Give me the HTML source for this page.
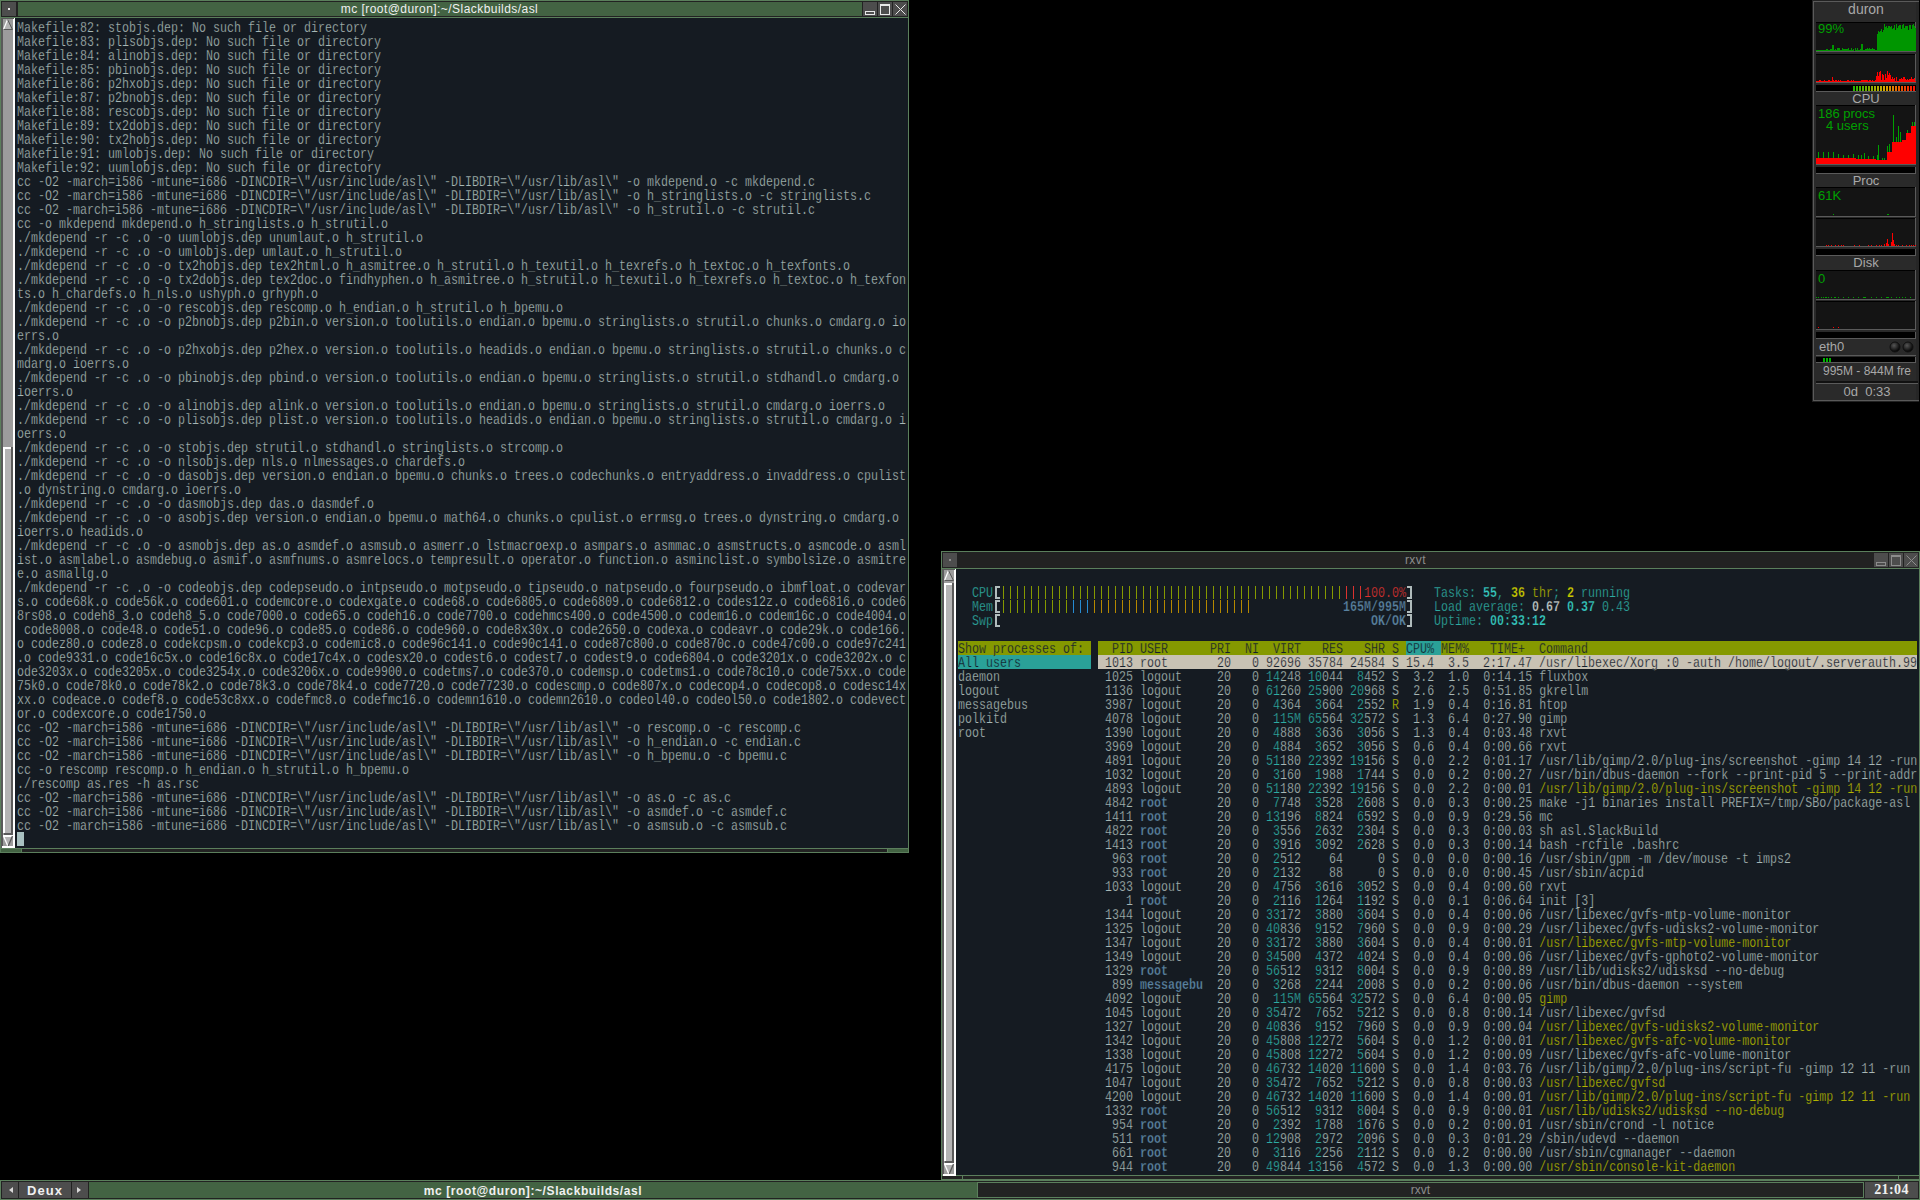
<!DOCTYPE html><html><head><meta charset="utf-8"><style>html,body{margin:0;padding:0;background:#000;width:1920px;height:1200px;overflow:hidden}
body{position:relative}
.a{position:absolute}
.term{position:absolute;font-family:"Liberation Mono",monospace;font-size:14px;line-height:14px;white-space:pre;transform-origin:0 0;transform:scaleX(0.833198)}
.term div{height:14px;position:relative;top:1px}
.term{-webkit-text-stroke:0.25px #151b22}
.n{color:#a8b8b6}.cyn{color:#2eaca2}.bcy{color:#35c9c0;font-weight:bold}.byl{color:#c8c800;font-weight:bold}.yl{color:#b2b400}
.brk{color:#b4bebe;font-weight:bold}.olv{color:#859900}.red{color:#dc322f}.blu{color:#268bd2}.org{color:#b58900}
.bgy{color:#5a82a0;font-weight:bold}.bwh{color:#c0c8c8;font-weight:bold}.dk{color:#14202c}.c{color:#2eaca2}
.sO{-webkit-text-stroke-color:#859900}.sT{-webkit-text-stroke-color:#2aa198}.sB{-webkit-text-stroke-color:#c8c2b4}
.sans{font-family:"Liberation Sans",sans-serif}
</style></head><body><div class="a" style="left:0px;top:0px;width:909px;height:853px;background:#5b7f5c;"></div><div class="a" style="left:1px;top:1px;width:907px;height:16px;background:#222222;"></div><div class="a" style="left:2px;top:2px;width:14px;height:14px;background:#4d4d4d;"></div><div class="a" style="left:8px;top:8px;width:2px;height:2px;background:#e8e8e8;"></div><div class="a" style="left:18px;top:2px;width:844px;height:14px;background:#436343;"></div><div class="a" style="left:863px;top:2px;width:14px;height:14px;background:#4d4d4d;"></div><div class="a" style="left:878px;top:2px;width:14px;height:14px;background:#4d4d4d;"></div><div class="a" style="left:893px;top:2px;width:14px;height:14px;background:#4d4d4d;"></div><svg class="a" style="left:863px;top:2px" width="44" height="14" viewBox="0 0 44 14"><rect x="2.5" y="9.5" width="9" height="3" fill="none" stroke="#e8e8e8" stroke-width="1"/><rect x="17.5" y="2.5" width="9" height="10" fill="none" stroke="#e8e8e8" stroke-width="1"/><rect x="17" y="2" width="10" height="2" fill="#e8e8e8"/><path d="M32.5 2.5 L42.5 12.5 M42.5 2.5 L32.5 12.5" stroke="#e8e8e8" stroke-width="1"/></svg><div class="a sans" style="left:18px;top:2px;width:843px;height:14px;line-height:14px;text-align:center;font-size:12px;letter-spacing:0.45px;color:#f0f0f0">mc [root@duron]:~/Slackbuilds/asl</div><div class="a" style="left:1px;top:18px;width:907px;height:830px;background:#151b22;"></div><div class="a" style="left:1px;top:18px;width:14px;height:830px;background:#5a5a5a;"></div><div class="a" style="left:3px;top:18px;width:10px;height:830px;background:#9c9c9c;"></div><div class="a" style="left:13px;top:18px;width:2px;height:830px;background:#ffffff;"></div><div class="a" style="left:1px;top:849px;width:907px;height:3px;background:#222222;"></div><div class="a" style="left:1px;top:849px;width:20px;height:3px;background:#436343;"></div><div class="a" style="left:888px;top:849px;width:20px;height:3px;background:#436343;"></div><div class="a" style="left:21px;top:849px;width:1px;height:3px;background:#5b7f5c;"></div><div class="a" style="left:887px;top:849px;width:1px;height:3px;background:#5b7f5c;"></div><svg class="a" style="left:1px;top:18px" width="14" height="13" viewBox="0 0 14 13"><rect x="0" y="0" width="13" height="1" fill="#5a5a5a"/><polygon points="2.5,11.5 6.5,1.5 10.5,11.5" fill="#b4b4b4"/><path d="M2.5 11.5 L6.5 1.5" stroke="#fff" stroke-width="1.2" fill="none"/><path d="M6.5 1.5 L11.5 11.5 L2.5 11.5" stroke="#5a5a5a" stroke-width="1" fill="none"/></svg><div class="a" style="left:3px;top:447px;width:10px;height:388px;background:#5a5a5a;"></div><div class="a" style="left:3px;top:447px;width:8px;height:386px;background:#ffffff;"></div><div class="a" style="left:5px;top:449px;width:6px;height:384px;background:#b4b4b4;"></div><div class="a" style="left:3px;top:833px;width:1px;height:2px;background:#9c9c9c;"></div><svg class="a" style="left:1px;top:835px" width="14" height="13" viewBox="0 0 14 13"><polygon points="2,0.5 12,0.5 7,11" fill="#b4b4b4"/><path d="M2 1 L12 1" stroke="#fff" stroke-width="2" fill="none"/><path d="M2.5 1 L6.8 11" stroke="#fff" stroke-width="1.3" fill="none"/><path d="M11.5 1 L7.2 11" stroke="#5a5a5a" stroke-width="1.3" fill="none"/><rect x="1" y="11" width="13" height="2" fill="#fff"/></svg><div class="a" style="left:17px;top:832px;width:7px;height:14px;background:#a8c0c0;"></div><div class="term" style="left:17px;top:20px;color:#a8b8b6"><div>Makefile:82: stobjs.dep: No such file or directory</div><div>Makefile:83: plisobjs.dep: No such file or directory</div><div>Makefile:84: alinobjs.dep: No such file or directory</div><div>Makefile:85: pbinobjs.dep: No such file or directory</div><div>Makefile:86: p2hxobjs.dep: No such file or directory</div><div>Makefile:87: p2bnobjs.dep: No such file or directory</div><div>Makefile:88: rescobjs.dep: No such file or directory</div><div>Makefile:89: tx2dobjs.dep: No such file or directory</div><div>Makefile:90: tx2hobjs.dep: No such file or directory</div><div>Makefile:91: umlobjs.dep: No such file or directory</div><div>Makefile:92: uumlobjs.dep: No such file or directory</div><div>cc -O2 -march=i586 -mtune=i686 -DINCDIR=\&quot;/usr/include/asl\&quot; -DLIBDIR=\&quot;/usr/lib/asl\&quot; -o mkdepend.o -c mkdepend.c</div><div>cc -O2 -march=i586 -mtune=i686 -DINCDIR=\&quot;/usr/include/asl\&quot; -DLIBDIR=\&quot;/usr/lib/asl\&quot; -o h_stringlists.o -c stringlists.c</div><div>cc -O2 -march=i586 -mtune=i686 -DINCDIR=\&quot;/usr/include/asl\&quot; -DLIBDIR=\&quot;/usr/lib/asl\&quot; -o h_strutil.o -c strutil.c</div><div>cc -o mkdepend mkdepend.o h_stringlists.o h_strutil.o</div><div>./mkdepend -r -c .o -o uumlobjs.dep unumlaut.o h_strutil.o</div><div>./mkdepend -r -c .o -o umlobjs.dep umlaut.o h_strutil.o</div><div>./mkdepend -r -c .o -o tx2hobjs.dep tex2html.o h_asmitree.o h_strutil.o h_texutil.o h_texrefs.o h_textoc.o h_texfonts.o</div><div>./mkdepend -r -c .o -o tx2dobjs.dep tex2doc.o findhyphen.o h_asmitree.o h_strutil.o h_texutil.o h_texrefs.o h_textoc.o h_texfon</div><div>ts.o h_chardefs.o h_nls.o ushyph.o grhyph.o</div><div>./mkdepend -r -c .o -o rescobjs.dep rescomp.o h_endian.o h_strutil.o h_bpemu.o</div><div>./mkdepend -r -c .o -o p2bnobjs.dep p2bin.o version.o toolutils.o endian.o bpemu.o stringlists.o strutil.o chunks.o cmdarg.o io</div><div>errs.o</div><div>./mkdepend -r -c .o -o p2hxobjs.dep p2hex.o version.o toolutils.o headids.o endian.o bpemu.o stringlists.o strutil.o chunks.o c</div><div>mdarg.o ioerrs.o</div><div>./mkdepend -r -c .o -o pbinobjs.dep pbind.o version.o toolutils.o endian.o bpemu.o stringlists.o strutil.o stdhandl.o cmdarg.o </div><div>ioerrs.o</div><div>./mkdepend -r -c .o -o alinobjs.dep alink.o version.o toolutils.o endian.o bpemu.o stringlists.o strutil.o cmdarg.o ioerrs.o</div><div>./mkdepend -r -c .o -o plisobjs.dep plist.o version.o toolutils.o headids.o endian.o bpemu.o stringlists.o strutil.o cmdarg.o i</div><div>oerrs.o</div><div>./mkdepend -r -c .o -o stobjs.dep strutil.o stdhandl.o stringlists.o strcomp.o</div><div>./mkdepend -r -c .o -o nlsobjs.dep nls.o nlmessages.o chardefs.o</div><div>./mkdepend -r -c .o -o dasobjs.dep version.o endian.o bpemu.o chunks.o trees.o codechunks.o entryaddress.o invaddress.o cpulist</div><div>.o dynstring.o cmdarg.o ioerrs.o</div><div>./mkdepend -r -c .o -o dasmobjs.dep das.o dasmdef.o</div><div>./mkdepend -r -c .o -o asobjs.dep version.o endian.o bpemu.o math64.o chunks.o cpulist.o errmsg.o trees.o dynstring.o cmdarg.o </div><div>ioerrs.o headids.o</div><div>./mkdepend -r -c .o -o asmobjs.dep as.o asmdef.o asmsub.o asmerr.o lstmacroexp.o asmpars.o asmmac.o asmstructs.o asmcode.o asml</div><div>ist.o asmlabel.o asmdebug.o asmif.o asmfnums.o asmrelocs.o tempresult.o operator.o function.o asminclist.o symbolsize.o asmitre</div><div>e.o asmallg.o</div><div>./mkdepend -r -c .o -o codeobjs.dep codepseudo.o intpseudo.o motpseudo.o tipseudo.o natpseudo.o fourpseudo.o ibmfloat.o codevar</div><div>s.o code68k.o code56k.o code601.o codemcore.o codexgate.o code68.o code6805.o code6809.o code6812.o codes12z.o code6816.o code6</div><div>8rs08.o codeh8_3.o codeh8_5.o code7000.o code65.o codeh16.o code7700.o codehmcs400.o code4500.o codem16.o codem16c.o code4004.o</div><div> code8008.o code48.o code51.o code96.o code85.o code86.o code960.o code8x30x.o code2650.o codexa.o codeavr.o code29k.o code166.</div><div>o codez80.o codez8.o codekcpsm.o codekcp3.o codemic8.o code96c141.o code90c141.o code87c800.o code870c.o code47c00.o code97c241</div><div>.o code9331.o code16c5x.o code16c8x.o code17c4x.o codesx20.o codest6.o codest7.o codest9.o code6804.o code3201x.o code3202x.o c</div><div>ode3203x.o code3205x.o code3254x.o code3206x.o code9900.o codetms7.o code370.o codemsp.o codetms1.o code78c10.o code75xx.o code</div><div>75k0.o code78k0.o code78k2.o code78k3.o code78k4.o code7720.o code77230.o codescmp.o code807x.o codecop4.o codecop8.o codesc14x</div><div>xx.o codeace.o codef8.o code53c8xx.o codefmc8.o codefmc16.o codemn1610.o codemn2610.o codeol40.o codeol50.o code1802.o codevect</div><div>or.o codexcore.o code1750.o</div><div>cc -O2 -march=i586 -mtune=i686 -DINCDIR=\&quot;/usr/include/asl\&quot; -DLIBDIR=\&quot;/usr/lib/asl\&quot; -o rescomp.o -c rescomp.c</div><div>cc -O2 -march=i586 -mtune=i686 -DINCDIR=\&quot;/usr/include/asl\&quot; -DLIBDIR=\&quot;/usr/lib/asl\&quot; -o h_endian.o -c endian.c</div><div>cc -O2 -march=i586 -mtune=i686 -DINCDIR=\&quot;/usr/include/asl\&quot; -DLIBDIR=\&quot;/usr/lib/asl\&quot; -o h_bpemu.o -c bpemu.c</div><div>cc -o rescomp rescomp.o h_endian.o h_strutil.o h_bpemu.o</div><div>./rescomp as.res -h as.rsc</div><div>cc -O2 -march=i586 -mtune=i686 -DINCDIR=\&quot;/usr/include/asl\&quot; -DLIBDIR=\&quot;/usr/lib/asl\&quot; -o as.o -c as.c</div><div>cc -O2 -march=i586 -mtune=i686 -DINCDIR=\&quot;/usr/include/asl\&quot; -DLIBDIR=\&quot;/usr/lib/asl\&quot; -o asmdef.o -c asmdef.c</div><div>cc -O2 -march=i586 -mtune=i686 -DINCDIR=\&quot;/usr/include/asl\&quot; -DLIBDIR=\&quot;/usr/lib/asl\&quot; -o asmsub.o -c asmsub.c</div><div></div></div><div class="a" style="left:941px;top:551px;width:979px;height:629px;background:#5b7f5c;"></div><div class="a" style="left:942px;top:552px;width:977px;height:16px;background:#222222;"></div><div class="a" style="left:943px;top:553px;width:14px;height:14px;background:#4d4d4d;"></div><div class="a" style="left:949px;top:559px;width:2px;height:2px;background:#8c8c8c;"></div><div class="a" style="left:959px;top:553px;width:914px;height:14px;background:#222222;"></div><div class="a" style="left:1874px;top:553px;width:14px;height:14px;background:#4d4d4d;"></div><div class="a" style="left:1889px;top:553px;width:14px;height:14px;background:#4d4d4d;"></div><div class="a" style="left:1904px;top:553px;width:14px;height:14px;background:#4d4d4d;"></div><svg class="a" style="left:1874px;top:553px" width="44" height="14" viewBox="0 0 44 14"><rect x="2.5" y="9.5" width="9" height="3" fill="none" stroke="#8c8c8c" stroke-width="1"/><rect x="17.5" y="2.5" width="9" height="10" fill="none" stroke="#8c8c8c" stroke-width="1"/><rect x="17" y="2" width="10" height="2" fill="#8c8c8c"/><path d="M32.5 2.5 L42.5 12.5 M42.5 2.5 L32.5 12.5" stroke="#8c8c8c" stroke-width="1"/></svg><div class="a sans" style="left:959px;top:553px;width:913px;height:14px;line-height:14px;text-align:center;font-size:12px;letter-spacing:0.45px;color:#8c8c8c">rxvt</div><div class="a" style="left:942px;top:569px;width:977px;height:606px;background:#151b22;"></div><div class="a" style="left:942px;top:569px;width:14px;height:606px;background:#5a5a5a;"></div><div class="a" style="left:944px;top:569px;width:10px;height:606px;background:#9c9c9c;"></div><div class="a" style="left:954px;top:569px;width:2px;height:606px;background:#ffffff;"></div><div class="a" style="left:942px;top:1176px;width:977px;height:3px;background:#222222;"></div><div class="a" style="left:962px;top:1176px;width:1px;height:3px;background:#5b7f5c;"></div><div class="a" style="left:1898px;top:1176px;width:1px;height:3px;background:#5b7f5c;"></div><svg class="a" style="left:942px;top:569px" width="14" height="13" viewBox="0 0 14 13"><rect x="0" y="0" width="13" height="1" fill="#5a5a5a"/><polygon points="2.5,11.5 6.5,1.5 10.5,11.5" fill="#b4b4b4"/><path d="M2.5 11.5 L6.5 1.5" stroke="#fff" stroke-width="1.2" fill="none"/><path d="M6.5 1.5 L11.5 11.5 L2.5 11.5" stroke="#5a5a5a" stroke-width="1" fill="none"/></svg><div class="a" style="left:944px;top:583px;width:10px;height:580px;background:#5a5a5a;"></div><div class="a" style="left:944px;top:583px;width:8px;height:578px;background:#ffffff;"></div><div class="a" style="left:946px;top:585px;width:6px;height:576px;background:#b4b4b4;"></div><div class="a" style="left:944px;top:1161px;width:1px;height:2px;background:#9c9c9c;"></div><svg class="a" style="left:942px;top:1163px" width="14" height="13" viewBox="0 0 14 13"><polygon points="2,0.5 12,0.5 7,11" fill="#b4b4b4"/><path d="M2 1 L12 1" stroke="#fff" stroke-width="2" fill="none"/><path d="M2.5 1 L6.8 11" stroke="#fff" stroke-width="1.3" fill="none"/><path d="M11.5 1 L7.2 11" stroke="#5a5a5a" stroke-width="1.3" fill="none"/><rect x="1" y="11" width="13" height="2" fill="#fff"/></svg><div class="a" style="left:958px;top:641px;width:133px;height:14px;background:#859900;"></div><div class="a" style="left:1098px;top:641px;width:819px;height:14px;background:#859900;"></div><div class="a" style="left:1406px;top:641px;width:35px;height:14px;background:#2aa198;"></div><div class="a" style="left:958px;top:655px;width:133px;height:14px;background:#2aa198;"></div><div class="a" style="left:1098px;top:655px;width:819px;height:14px;background:#c8c2b4;"></div><svg class="a" style="left:958px;top:571px" width="960" height="60"><rect x="45" y="15" width="1" height="13" fill="#859900"/><rect x="52" y="15" width="1" height="13" fill="#859900"/><rect x="59" y="15" width="1" height="13" fill="#859900"/><rect x="66" y="15" width="1" height="13" fill="#859900"/><rect x="73" y="15" width="1" height="13" fill="#859900"/><rect x="80" y="15" width="1" height="13" fill="#859900"/><rect x="87" y="15" width="1" height="13" fill="#859900"/><rect x="94" y="15" width="1" height="13" fill="#859900"/><rect x="101" y="15" width="1" height="13" fill="#859900"/><rect x="108" y="15" width="1" height="13" fill="#859900"/><rect x="115" y="15" width="1" height="13" fill="#859900"/><rect x="122" y="15" width="1" height="13" fill="#859900"/><rect x="129" y="15" width="1" height="13" fill="#859900"/><rect x="136" y="15" width="1" height="13" fill="#859900"/><rect x="143" y="15" width="1" height="13" fill="#859900"/><rect x="150" y="15" width="1" height="13" fill="#859900"/><rect x="157" y="15" width="1" height="13" fill="#859900"/><rect x="164" y="15" width="1" height="13" fill="#859900"/><rect x="171" y="15" width="1" height="13" fill="#859900"/><rect x="178" y="15" width="1" height="13" fill="#859900"/><rect x="185" y="15" width="1" height="13" fill="#859900"/><rect x="192" y="15" width="1" height="13" fill="#859900"/><rect x="199" y="15" width="1" height="13" fill="#859900"/><rect x="206" y="15" width="1" height="13" fill="#859900"/><rect x="213" y="15" width="1" height="13" fill="#859900"/><rect x="220" y="15" width="1" height="13" fill="#859900"/><rect x="227" y="15" width="1" height="13" fill="#859900"/><rect x="234" y="15" width="1" height="13" fill="#859900"/><rect x="241" y="15" width="1" height="13" fill="#859900"/><rect x="248" y="15" width="1" height="13" fill="#859900"/><rect x="255" y="15" width="1" height="13" fill="#859900"/><rect x="262" y="15" width="1" height="13" fill="#859900"/><rect x="269" y="15" width="1" height="13" fill="#859900"/><rect x="276" y="15" width="1" height="13" fill="#859900"/><rect x="283" y="15" width="1" height="13" fill="#859900"/><rect x="290" y="15" width="1" height="13" fill="#859900"/><rect x="297" y="15" width="1" height="13" fill="#859900"/><rect x="304" y="15" width="1" height="13" fill="#859900"/><rect x="311" y="15" width="1" height="13" fill="#859900"/><rect x="318" y="15" width="1" height="13" fill="#859900"/><rect x="325" y="15" width="1" height="13" fill="#859900"/><rect x="332" y="15" width="1" height="13" fill="#859900"/><rect x="339" y="15" width="1" height="13" fill="#859900"/><rect x="346" y="15" width="1" height="13" fill="#859900"/><rect x="353" y="15" width="1" height="13" fill="#859900"/><rect x="360" y="15" width="1" height="13" fill="#859900"/><rect x="367" y="15" width="1" height="13" fill="#859900"/><rect x="374" y="15" width="1" height="13" fill="#859900"/><rect x="381" y="15" width="1" height="13" fill="#859900"/><rect x="388" y="15" width="1" height="13" fill="#dc322f"/><rect x="395" y="15" width="1" height="13" fill="#dc322f"/><rect x="402" y="15" width="1" height="13" fill="#dc322f"/><rect x="45" y="29" width="1" height="13" fill="#859900"/><rect x="52" y="29" width="1" height="13" fill="#859900"/><rect x="59" y="29" width="1" height="13" fill="#859900"/><rect x="66" y="29" width="1" height="13" fill="#859900"/><rect x="73" y="29" width="1" height="13" fill="#859900"/><rect x="80" y="29" width="1" height="13" fill="#859900"/><rect x="87" y="29" width="1" height="13" fill="#859900"/><rect x="94" y="29" width="1" height="13" fill="#859900"/><rect x="101" y="29" width="1" height="13" fill="#859900"/><rect x="108" y="29" width="1" height="13" fill="#859900"/><rect x="115" y="29" width="1" height="13" fill="#268bd2"/><rect x="122" y="29" width="1" height="13" fill="#268bd2"/><rect x="129" y="29" width="1" height="13" fill="#268bd2"/><rect x="136" y="29" width="1" height="13" fill="#b58900"/><rect x="143" y="29" width="1" height="13" fill="#b58900"/><rect x="150" y="29" width="1" height="13" fill="#b58900"/><rect x="157" y="29" width="1" height="13" fill="#b58900"/><rect x="164" y="29" width="1" height="13" fill="#b58900"/><rect x="171" y="29" width="1" height="13" fill="#b58900"/><rect x="178" y="29" width="1" height="13" fill="#b58900"/><rect x="185" y="29" width="1" height="13" fill="#b58900"/><rect x="192" y="29" width="1" height="13" fill="#b58900"/><rect x="199" y="29" width="1" height="13" fill="#b58900"/><rect x="206" y="29" width="1" height="13" fill="#b58900"/><rect x="213" y="29" width="1" height="13" fill="#b58900"/><rect x="220" y="29" width="1" height="13" fill="#b58900"/><rect x="227" y="29" width="1" height="13" fill="#b58900"/><rect x="234" y="29" width="1" height="13" fill="#b58900"/><rect x="241" y="29" width="1" height="13" fill="#b58900"/><rect x="248" y="29" width="1" height="13" fill="#b58900"/><rect x="255" y="29" width="1" height="13" fill="#b58900"/><rect x="262" y="29" width="1" height="13" fill="#b58900"/><rect x="269" y="29" width="1" height="13" fill="#b58900"/><rect x="276" y="29" width="1" height="13" fill="#b58900"/><rect x="283" y="29" width="1" height="13" fill="#b58900"/><rect x="290" y="29" width="1" height="13" fill="#b58900"/><path d="M37 15h5v2h-3v9h3v2h-5z" fill="#b0bcbc"/><path d="M449 15h5v13h-5v-2h3v-9h-3z" fill="#b0bcbc"/><path d="M37 29h5v2h-3v9h3v2h-5z" fill="#b0bcbc"/><path d="M449 29h5v13h-5v-2h3v-9h-3z" fill="#b0bcbc"/><path d="M37 43h5v2h-3v9h3v2h-5z" fill="#b0bcbc"/><path d="M449 43h5v13h-5v-2h3v-9h-3z" fill="#b0bcbc"/></svg><div class="term" style="left:958px;top:571px"><div></div><div><span class="n">  </span><span class="cyn">CPU</span><span class="brk"> </span><span class="olv">                                                 </span><span class="red">   </span><span class="red">100.0%</span><span class="brk"> </span><span class="n">   </span><span class="cyn">Tasks: </span><span class="bcy">55</span><span class="cyn">, </span><span class="byl">36</span><span class="yl"> thr</span><span class="cyn">; </span><span class="byl">2</span><span class="cyn"> running</span></div><div><span class="n">  </span><span class="cyn">Mem</span><span class="brk"> </span><span class="olv">                                    </span><span class="n">             </span><span class="bgy">165M/995M</span><span class="brk"> </span><span class="n">   </span><span class="cyn">Load average: </span><span class="bwh">0.67 </span><span class="bcy">0.37 </span><span class="cyn">0.43</span></div><div><span class="n">  </span><span class="cyn">Swp</span><span class="brk"> </span><span class="n">                                                     </span><span class="bgy">OK/OK</span><span class="brk"> </span><span class="n">   </span><span class="cyn">Uptime: </span><span class="bcy">00:33:12</span></div><div></div><div><span class="dk sO">Show processes of: </span><span class="n"> </span><span class="dk sO">  PID USER      PRI  NI  VIRT   RES   SHR S </span><span class="dk sT">CPU% </span><span class="dk sO">MEM%   TIME+  Command</span></div><div><span class="dk sT">All users          </span><span class="n"> </span><span class="dk sB"> 1013 root       20   0 92696 35784 24584 S 15.4  3.5  2:17.47 /usr/libexec/Xorg :0 -auth /home/logout/.serverauth.99</span></div><div><span class="n">daemon             </span><span class="n"> </span><span class="n"> 1025 </span><span class="n">logout   </span><span class="n"> </span><span class="n"> 20   0 </span><span class="c">14</span><span class="n">248</span><span class="n"> </span><span class="c">10</span><span class="n">044</span><span class="n"> </span><span class="c"> 8</span><span class="n">452</span><span class="n"> </span><span class="n">S</span><span class="n"> </span><span class="n"> 3.2  1.0  0:14.15 </span><span class="n">fluxbox</span></div><div><span class="n">logout             </span><span class="n"> </span><span class="n"> 1136 </span><span class="n">logout   </span><span class="n"> </span><span class="n"> 20   0 </span><span class="c">61</span><span class="n">260</span><span class="n"> </span><span class="c">25</span><span class="n">900</span><span class="n"> </span><span class="c">20</span><span class="n">968</span><span class="n"> </span><span class="n">S</span><span class="n"> </span><span class="n"> 2.6  2.5  0:51.85 </span><span class="n">gkrellm</span></div><div><span class="n">messagebus         </span><span class="n"> </span><span class="n"> 3987 </span><span class="n">logout   </span><span class="n"> </span><span class="n"> 20   0 </span><span class="c"> 4</span><span class="n">364</span><span class="n"> </span><span class="c"> 3</span><span class="n">664</span><span class="n"> </span><span class="c"> 2</span><span class="n">552</span><span class="n"> </span><span class="yl">R</span><span class="n"> </span><span class="n"> 1.9  0.4  0:16.81 </span><span class="n">htop</span></div><div><span class="n">polkitd            </span><span class="n"> </span><span class="n"> 4078 </span><span class="n">logout   </span><span class="n"> </span><span class="n"> 20   0 </span><span class="c"> 115M</span><span class="n"> </span><span class="c">65</span><span class="n">564</span><span class="n"> </span><span class="c">32</span><span class="n">572</span><span class="n"> </span><span class="n">S</span><span class="n"> </span><span class="n"> 1.3  6.4  0:27.90 </span><span class="n">gimp</span></div><div><span class="n">root               </span><span class="n"> </span><span class="n"> 1390 </span><span class="n">logout   </span><span class="n"> </span><span class="n"> 20   0 </span><span class="c"> 4</span><span class="n">888</span><span class="n"> </span><span class="c"> 3</span><span class="n">636</span><span class="n"> </span><span class="c"> 3</span><span class="n">056</span><span class="n"> </span><span class="n">S</span><span class="n"> </span><span class="n"> 1.3  0.4  0:03.48 </span><span class="n">rxvt</span></div><div><span class="n">                   </span><span class="n"> </span><span class="n"> 3969 </span><span class="n">logout   </span><span class="n"> </span><span class="n"> 20   0 </span><span class="c"> 4</span><span class="n">884</span><span class="n"> </span><span class="c"> 3</span><span class="n">652</span><span class="n"> </span><span class="c"> 3</span><span class="n">056</span><span class="n"> </span><span class="n">S</span><span class="n"> </span><span class="n"> 0.6  0.4  0:00.66 </span><span class="n">rxvt</span></div><div><span class="n">                   </span><span class="n"> </span><span class="n"> 4891 </span><span class="n">logout   </span><span class="n"> </span><span class="n"> 20   0 </span><span class="c">51</span><span class="n">180</span><span class="n"> </span><span class="c">22</span><span class="n">392</span><span class="n"> </span><span class="c">19</span><span class="n">156</span><span class="n"> </span><span class="n">S</span><span class="n"> </span><span class="n"> 0.0  2.2  0:01.17 </span><span class="n">/usr/lib/gimp/2.0/plug-ins/screenshot -gimp 14 12 -run</span></div><div><span class="n">                   </span><span class="n"> </span><span class="n"> 1032 </span><span class="n">logout   </span><span class="n"> </span><span class="n"> 20   0 </span><span class="c"> 3</span><span class="n">160</span><span class="n"> </span><span class="c"> 1</span><span class="n">988</span><span class="n"> </span><span class="c"> 1</span><span class="n">744</span><span class="n"> </span><span class="n">S</span><span class="n"> </span><span class="n"> 0.0  0.2  0:00.27 </span><span class="n">/usr/bin/dbus-daemon --fork --print-pid 5 --print-addr</span></div><div><span class="n">                   </span><span class="n"> </span><span class="n"> 4893 </span><span class="n">logout   </span><span class="n"> </span><span class="n"> 20   0 </span><span class="c">51</span><span class="n">180</span><span class="n"> </span><span class="c">22</span><span class="n">392</span><span class="n"> </span><span class="c">19</span><span class="n">156</span><span class="n"> </span><span class="n">S</span><span class="n"> </span><span class="n"> 0.0  2.2  0:00.01 </span><span class="yl">/usr/lib/gimp/2.0/plug-ins/screenshot -gimp 14 12 -run</span></div><div><span class="n">                   </span><span class="n"> </span><span class="n"> 4842 </span><span class="bgy">root     </span><span class="n"> </span><span class="n"> 20   0 </span><span class="c"> 7</span><span class="n">748</span><span class="n"> </span><span class="c"> 3</span><span class="n">528</span><span class="n"> </span><span class="c"> 2</span><span class="n">608</span><span class="n"> </span><span class="n">S</span><span class="n"> </span><span class="n"> 0.0  0.3  0:00.25 </span><span class="n">make -j1 binaries install PREFIX=/tmp/SBo/package-asl</span></div><div><span class="n">                   </span><span class="n"> </span><span class="n"> 1411 </span><span class="bgy">root     </span><span class="n"> </span><span class="n"> 20   0 </span><span class="c">13</span><span class="n">196</span><span class="n"> </span><span class="c"> 8</span><span class="n">824</span><span class="n"> </span><span class="c"> 6</span><span class="n">592</span><span class="n"> </span><span class="n">S</span><span class="n"> </span><span class="n"> 0.0  0.9  0:29.56 </span><span class="n">mc</span></div><div><span class="n">                   </span><span class="n"> </span><span class="n"> 4822 </span><span class="bgy">root     </span><span class="n"> </span><span class="n"> 20   0 </span><span class="c"> 3</span><span class="n">556</span><span class="n"> </span><span class="c"> 2</span><span class="n">632</span><span class="n"> </span><span class="c"> 2</span><span class="n">304</span><span class="n"> </span><span class="n">S</span><span class="n"> </span><span class="n"> 0.0  0.3  0:00.03 </span><span class="n">sh asl.SlackBuild</span></div><div><span class="n">                   </span><span class="n"> </span><span class="n"> 1413 </span><span class="bgy">root     </span><span class="n"> </span><span class="n"> 20   0 </span><span class="c"> 3</span><span class="n">916</span><span class="n"> </span><span class="c"> 3</span><span class="n">092</span><span class="n"> </span><span class="c"> 2</span><span class="n">628</span><span class="n"> </span><span class="n">S</span><span class="n"> </span><span class="n"> 0.0  0.3  0:00.14 </span><span class="n">bash -rcfile .bashrc</span></div><div><span class="n">                   </span><span class="n"> </span><span class="n">  963 </span><span class="bgy">root     </span><span class="n"> </span><span class="n"> 20   0 </span><span class="c"> 2</span><span class="n">512</span><span class="n"> </span><span class="n">   64</span><span class="n"> </span><span class="n">    0</span><span class="n"> </span><span class="n">S</span><span class="n"> </span><span class="n"> 0.0  0.0  0:00.16 </span><span class="n">/usr/sbin/gpm -m /dev/mouse -t imps2</span></div><div><span class="n">                   </span><span class="n"> </span><span class="n">  933 </span><span class="bgy">root     </span><span class="n"> </span><span class="n"> 20   0 </span><span class="c"> 2</span><span class="n">132</span><span class="n"> </span><span class="n">   88</span><span class="n"> </span><span class="n">    0</span><span class="n"> </span><span class="n">S</span><span class="n"> </span><span class="n"> 0.0  0.0  0:00.45 </span><span class="n">/usr/sbin/acpid</span></div><div><span class="n">                   </span><span class="n"> </span><span class="n"> 1033 </span><span class="n">logout   </span><span class="n"> </span><span class="n"> 20   0 </span><span class="c"> 4</span><span class="n">756</span><span class="n"> </span><span class="c"> 3</span><span class="n">616</span><span class="n"> </span><span class="c"> 3</span><span class="n">052</span><span class="n"> </span><span class="n">S</span><span class="n"> </span><span class="n"> 0.0  0.4  0:00.60 </span><span class="n">rxvt</span></div><div><span class="n">                   </span><span class="n"> </span><span class="n">    1 </span><span class="bgy">root     </span><span class="n"> </span><span class="n"> 20   0 </span><span class="c"> 2</span><span class="n">116</span><span class="n"> </span><span class="c"> 1</span><span class="n">264</span><span class="n"> </span><span class="c"> 1</span><span class="n">192</span><span class="n"> </span><span class="n">S</span><span class="n"> </span><span class="n"> 0.0  0.1  0:06.64 </span><span class="n">init [3]</span></div><div><span class="n">                   </span><span class="n"> </span><span class="n"> 1344 </span><span class="n">logout   </span><span class="n"> </span><span class="n"> 20   0 </span><span class="c">33</span><span class="n">172</span><span class="n"> </span><span class="c"> 3</span><span class="n">880</span><span class="n"> </span><span class="c"> 3</span><span class="n">604</span><span class="n"> </span><span class="n">S</span><span class="n"> </span><span class="n"> 0.0  0.4  0:00.06 </span><span class="n">/usr/libexec/gvfs-mtp-volume-monitor</span></div><div><span class="n">                   </span><span class="n"> </span><span class="n"> 1325 </span><span class="n">logout   </span><span class="n"> </span><span class="n"> 20   0 </span><span class="c">40</span><span class="n">836</span><span class="n"> </span><span class="c"> 9</span><span class="n">152</span><span class="n"> </span><span class="c"> 7</span><span class="n">960</span><span class="n"> </span><span class="n">S</span><span class="n"> </span><span class="n"> 0.0  0.9  0:00.29 </span><span class="n">/usr/libexec/gvfs-udisks2-volume-monitor</span></div><div><span class="n">                   </span><span class="n"> </span><span class="n"> 1347 </span><span class="n">logout   </span><span class="n"> </span><span class="n"> 20   0 </span><span class="c">33</span><span class="n">172</span><span class="n"> </span><span class="c"> 3</span><span class="n">880</span><span class="n"> </span><span class="c"> 3</span><span class="n">604</span><span class="n"> </span><span class="n">S</span><span class="n"> </span><span class="n"> 0.0  0.4  0:00.01 </span><span class="yl">/usr/libexec/gvfs-mtp-volume-monitor</span></div><div><span class="n">                   </span><span class="n"> </span><span class="n"> 1349 </span><span class="n">logout   </span><span class="n"> </span><span class="n"> 20   0 </span><span class="c">34</span><span class="n">500</span><span class="n"> </span><span class="c"> 4</span><span class="n">372</span><span class="n"> </span><span class="c"> 4</span><span class="n">024</span><span class="n"> </span><span class="n">S</span><span class="n"> </span><span class="n"> 0.0  0.4  0:00.06 </span><span class="n">/usr/libexec/gvfs-gphoto2-volume-monitor</span></div><div><span class="n">                   </span><span class="n"> </span><span class="n"> 1329 </span><span class="bgy">root     </span><span class="n"> </span><span class="n"> 20   0 </span><span class="c">56</span><span class="n">512</span><span class="n"> </span><span class="c"> 9</span><span class="n">312</span><span class="n"> </span><span class="c"> 8</span><span class="n">004</span><span class="n"> </span><span class="n">S</span><span class="n"> </span><span class="n"> 0.0  0.9  0:00.89 </span><span class="n">/usr/lib/udisks2/udisksd --no-debug</span></div><div><span class="n">                   </span><span class="n"> </span><span class="n">  899 </span><span class="bgy">messagebu</span><span class="n"> </span><span class="n"> 20   0 </span><span class="c"> 3</span><span class="n">268</span><span class="n"> </span><span class="c"> 2</span><span class="n">244</span><span class="n"> </span><span class="c"> 2</span><span class="n">008</span><span class="n"> </span><span class="n">S</span><span class="n"> </span><span class="n"> 0.0  0.2  0:00.06 </span><span class="n">/usr/bin/dbus-daemon --system</span></div><div><span class="n">                   </span><span class="n"> </span><span class="n"> 4092 </span><span class="n">logout   </span><span class="n"> </span><span class="n"> 20   0 </span><span class="c"> 115M</span><span class="n"> </span><span class="c">65</span><span class="n">564</span><span class="n"> </span><span class="c">32</span><span class="n">572</span><span class="n"> </span><span class="n">S</span><span class="n"> </span><span class="n"> 0.0  6.4  0:00.05 </span><span class="yl">gimp</span></div><div><span class="n">                   </span><span class="n"> </span><span class="n"> 1045 </span><span class="n">logout   </span><span class="n"> </span><span class="n"> 20   0 </span><span class="c">35</span><span class="n">472</span><span class="n"> </span><span class="c"> 7</span><span class="n">652</span><span class="n"> </span><span class="c"> 5</span><span class="n">212</span><span class="n"> </span><span class="n">S</span><span class="n"> </span><span class="n"> 0.0  0.8  0:00.14 </span><span class="n">/usr/libexec/gvfsd</span></div><div><span class="n">                   </span><span class="n"> </span><span class="n"> 1327 </span><span class="n">logout   </span><span class="n"> </span><span class="n"> 20   0 </span><span class="c">40</span><span class="n">836</span><span class="n"> </span><span class="c"> 9</span><span class="n">152</span><span class="n"> </span><span class="c"> 7</span><span class="n">960</span><span class="n"> </span><span class="n">S</span><span class="n"> </span><span class="n"> 0.0  0.9  0:00.04 </span><span class="yl">/usr/libexec/gvfs-udisks2-volume-monitor</span></div><div><span class="n">                   </span><span class="n"> </span><span class="n"> 1342 </span><span class="n">logout   </span><span class="n"> </span><span class="n"> 20   0 </span><span class="c">45</span><span class="n">808</span><span class="n"> </span><span class="c">12</span><span class="n">272</span><span class="n"> </span><span class="c"> 5</span><span class="n">604</span><span class="n"> </span><span class="n">S</span><span class="n"> </span><span class="n"> 0.0  1.2  0:00.01 </span><span class="yl">/usr/libexec/gvfs-afc-volume-monitor</span></div><div><span class="n">                   </span><span class="n"> </span><span class="n"> 1338 </span><span class="n">logout   </span><span class="n"> </span><span class="n"> 20   0 </span><span class="c">45</span><span class="n">808</span><span class="n"> </span><span class="c">12</span><span class="n">272</span><span class="n"> </span><span class="c"> 5</span><span class="n">604</span><span class="n"> </span><span class="n">S</span><span class="n"> </span><span class="n"> 0.0  1.2  0:00.09 </span><span class="n">/usr/libexec/gvfs-afc-volume-monitor</span></div><div><span class="n">                   </span><span class="n"> </span><span class="n"> 4175 </span><span class="n">logout   </span><span class="n"> </span><span class="n"> 20   0 </span><span class="c">46</span><span class="n">732</span><span class="n"> </span><span class="c">14</span><span class="n">020</span><span class="n"> </span><span class="c">11</span><span class="n">600</span><span class="n"> </span><span class="n">S</span><span class="n"> </span><span class="n"> 0.0  1.4  0:03.76 </span><span class="n">/usr/lib/gimp/2.0/plug-ins/script-fu -gimp 12 11 -run</span></div><div><span class="n">                   </span><span class="n"> </span><span class="n"> 1047 </span><span class="n">logout   </span><span class="n"> </span><span class="n"> 20   0 </span><span class="c">35</span><span class="n">472</span><span class="n"> </span><span class="c"> 7</span><span class="n">652</span><span class="n"> </span><span class="c"> 5</span><span class="n">212</span><span class="n"> </span><span class="n">S</span><span class="n"> </span><span class="n"> 0.0  0.8  0:00.03 </span><span class="yl">/usr/libexec/gvfsd</span></div><div><span class="n">                   </span><span class="n"> </span><span class="n"> 4200 </span><span class="n">logout   </span><span class="n"> </span><span class="n"> 20   0 </span><span class="c">46</span><span class="n">732</span><span class="n"> </span><span class="c">14</span><span class="n">020</span><span class="n"> </span><span class="c">11</span><span class="n">600</span><span class="n"> </span><span class="n">S</span><span class="n"> </span><span class="n"> 0.0  1.4  0:00.01 </span><span class="yl">/usr/lib/gimp/2.0/plug-ins/script-fu -gimp 12 11 -run</span></div><div><span class="n">                   </span><span class="n"> </span><span class="n"> 1332 </span><span class="bgy">root     </span><span class="n"> </span><span class="n"> 20   0 </span><span class="c">56</span><span class="n">512</span><span class="n"> </span><span class="c"> 9</span><span class="n">312</span><span class="n"> </span><span class="c"> 8</span><span class="n">004</span><span class="n"> </span><span class="n">S</span><span class="n"> </span><span class="n"> 0.0  0.9  0:00.01 </span><span class="yl">/usr/lib/udisks2/udisksd --no-debug</span></div><div><span class="n">                   </span><span class="n"> </span><span class="n">  954 </span><span class="bgy">root     </span><span class="n"> </span><span class="n"> 20   0 </span><span class="c"> 2</span><span class="n">392</span><span class="n"> </span><span class="c"> 1</span><span class="n">788</span><span class="n"> </span><span class="c"> 1</span><span class="n">676</span><span class="n"> </span><span class="n">S</span><span class="n"> </span><span class="n"> 0.0  0.2  0:00.01 </span><span class="n">/usr/sbin/crond -l notice</span></div><div><span class="n">                   </span><span class="n"> </span><span class="n">  511 </span><span class="bgy">root     </span><span class="n"> </span><span class="n"> 20   0 </span><span class="c">12</span><span class="n">908</span><span class="n"> </span><span class="c"> 2</span><span class="n">972</span><span class="n"> </span><span class="c"> 2</span><span class="n">096</span><span class="n"> </span><span class="n">S</span><span class="n"> </span><span class="n"> 0.0  0.3  0:01.29 </span><span class="n">/sbin/udevd --daemon</span></div><div><span class="n">                   </span><span class="n"> </span><span class="n">  661 </span><span class="bgy">root     </span><span class="n"> </span><span class="n"> 20   0 </span><span class="c"> 3</span><span class="n">116</span><span class="n"> </span><span class="c"> 2</span><span class="n">256</span><span class="n"> </span><span class="c"> 2</span><span class="n">112</span><span class="n"> </span><span class="n">S</span><span class="n"> </span><span class="n"> 0.0  0.2  0:00.00 </span><span class="n">/usr/sbin/cgmanager --daemon</span></div><div><span class="n">                   </span><span class="n"> </span><span class="n">  944 </span><span class="bgy">root     </span><span class="n"> </span><span class="n"> 20   0 </span><span class="c">49</span><span class="n">844</span><span class="n"> </span><span class="c">13</span><span class="n">156</span><span class="n"> </span><span class="c"> 4</span><span class="n">572</span><span class="n"> </span><span class="n">S</span><span class="n"> </span><span class="n"> 0.0  1.3  0:00.00 </span><span class="yl">/usr/sbin/console-kit-daemon</span></div></div><div class="a" style="left:1812px;top:0px;width:108px;height:402px;background:#222222;"></div><div class="a" style="left:1813px;top:1px;width:106px;height:400px;background:#5a5a5a;"></div><div class="a" style="left:1814px;top:2px;width:105px;height:398px;background:#2a2a2a;"></div><div class="a" style="left:1916px;top:2px;width:3px;height:398px;background:#262626;"></div><div class="a" style="left:1919px;top:0px;width:1px;height:402px;background:#000000;"></div><div class="a sans" style="left:1814px;top:1px;width:104px;height:16px;line-height:16px;text-align:center;font-size:14px;color:#a8a8a8">duron</div><div class="a" style="left:1816px;top:22px;width:100px;height:30px;background:#141414;"></div><div class="a" style="left:1816px;top:22px;width:100px;height:1px;background:#000000;"></div><div class="a" style="left:1915px;top:22px;width:1px;height:30px;background:#5a5a5a;"></div><div class="a" style="left:1816px;top:51px;width:100px;height:1px;background:#5a5a5a;"></div><svg class="a" style="left:0;top:0" width="1920" height="402"><path d="M1816 51 V50 H1817 V50 H1818 V50 H1819 V50 H1820 V50 H1821 V50 H1822 V50 H1823 V50 H1824 V50 H1825 V50 H1826 V49 H1827 V49 H1828 V50 H1829 V50 H1830 V49 H1831 V49 H1832 V45 H1833 V45 H1834 V50 H1835 V49 H1836 V50 H1837 V48 H1838 V48 H1839 V48 H1840 V50 H1841 V50 H1842 V48 H1843 V49 H1844 V49 H1845 V49 H1846 V49 H1847 V49 H1848 V48 H1849 V50 H1850 V50 H1851 V48 H1852 V50 H1853 V49 H1854 V51 H1855 V48 H1856 V50 H1857 V48 H1858 V50 H1859 V50 H1860 V49 H1861 V44 H1862 V44 H1863 V50 H1864 V50 H1865 V49 H1866 V49 H1867 V48 H1868 V49 H1869 V48 H1870 V49 H1871 V49 H1872 V48 H1873 V49 H1874 V49 H1875 V50 H1876 V50 H1877 V34 H1878 V31 H1879 V32 H1880 V31 H1881 V29 H1882 V32 H1883 V30 H1884 V24 H1885 V27 H1886 V26 H1887 V28 H1888 V26 H1889 V26 H1890 V27 H1891 V26 H1892 V29 H1893 V28 H1894 V25 H1895 V30 H1896 V24 H1897 V28 H1898 V26 H1899 V25 H1900 V25 H1901 V29 H1902 V25 H1903 V24 H1904 V28 H1905 V26 H1906 V26 H1907 V26 H1908 V30 H1909 V25 H1910 V25 H1911 V29 H1912 V25 H1913 V24 H1914 V26 H1915 V28 H1916 V51 Z" fill="#009600"/></svg><div class="a sans" style="left:1818px;top:22px;font-size:13px;line-height:14px;color:#00a000">99%</div><div class="a" style="left:1816px;top:54px;width:100px;height:29px;background:#141414;"></div><div class="a" style="left:1816px;top:54px;width:100px;height:1px;background:#000000;"></div><div class="a" style="left:1915px;top:54px;width:1px;height:29px;background:#5a5a5a;"></div><div class="a" style="left:1816px;top:82px;width:100px;height:1px;background:#5a5a5a;"></div><svg class="a" style="left:0;top:0" width="1920" height="402"><path d="M1816 82 V81 H1817 V81 H1818 V81 H1819 V80 H1820 V80 H1821 V81 H1822 V81 H1823 V81 H1824 V80 H1825 V81 H1826 V81 H1827 V81 H1828 V80 H1829 V80 H1830 V81 H1831 V81 H1832 V77 H1833 V80 H1834 V81 H1835 V80 H1836 V80 H1837 V81 H1838 V80 H1839 V81 H1840 V80 H1841 V81 H1842 V81 H1843 V81 H1844 V81 H1845 V81 H1846 V81 H1847 V80 H1848 V80 H1849 V81 H1850 V81 H1851 V80 H1852 V81 H1853 V80 H1854 V81 H1855 V81 H1856 V81 H1857 V81 H1858 V81 H1859 V81 H1860 V81 H1861 V80 H1862 V80 H1863 V80 H1864 V80 H1865 V80 H1866 V80 H1867 V80 H1868 V81 H1869 V80 H1870 V80 H1871 V81 H1872 V80 H1873 V81 H1874 V81 H1875 V80 H1876 V76 H1877 V72 H1878 V76 H1879 V72 H1880 V71 H1881 V80 H1882 V74 H1883 V75 H1884 V80 H1885 V74 H1886 V78 H1887 V71 H1888 V75 H1889 V73 H1890 V75 H1891 V79 H1892 V77 H1893 V79 H1894 V78 H1895 V81 H1896 V77 H1897 V81 H1898 V81 H1899 V79 H1900 V79 H1901 V78 H1902 V79 H1903 V77 H1904 V77 H1905 V79 H1906 V80 H1907 V79 H1908 V80 H1909 V79 H1910 V79 H1911 V77 H1912 V79 H1913 V79 H1914 V78 H1915 V81 H1916 V82 Z" fill="#ff0000"/></svg><div class="a" style="left:1816px;top:85px;width:100px;height:7px;background:#000000;"></div><svg class="a" style="left:0;top:0" width="1920" height="402"><rect x="1853" y="86" width="2" height="5" fill="rgb(40,180,0)"/><rect x="1856" y="86" width="2" height="5" fill="rgb(57,179,0)"/><rect x="1859" y="86" width="2" height="5" fill="rgb(74,178,0)"/><rect x="1862" y="86" width="2" height="5" fill="rgb(91,177,0)"/><rect x="1865" y="86" width="2" height="5" fill="rgb(108,176,0)"/><rect x="1868" y="86" width="2" height="5" fill="rgb(125,175,0)"/><rect x="1871" y="86" width="2" height="5" fill="rgb(142,174,0)"/><rect x="1874" y="86" width="2" height="5" fill="rgb(159,173,0)"/><rect x="1877" y="86" width="2" height="5" fill="rgb(176,172,0)"/><rect x="1880" y="86" width="2" height="5" fill="rgb(193,171,0)"/><rect x="1883" y="86" width="2" height="5" fill="rgb(210,170,0)"/><rect x="1886" y="86" width="2" height="5" fill="rgb(214,155,0)"/><rect x="1889" y="86" width="2" height="5" fill="rgb(219,140,0)"/><rect x="1892" y="86" width="2" height="5" fill="rgb(223,125,0)"/><rect x="1895" y="86" width="2" height="5" fill="rgb(228,110,0)"/><rect x="1898" y="86" width="2" height="5" fill="rgb(232,95,0)"/><rect x="1901" y="86" width="2" height="5" fill="rgb(237,79,0)"/><rect x="1904" y="86" width="2" height="5" fill="rgb(241,65,0)"/><rect x="1907" y="86" width="2" height="5" fill="rgb(246,50,0)"/><rect x="1910" y="86" width="2" height="5" fill="rgb(250,35,0)"/><rect x="1913" y="86" width="2" height="5" fill="rgb(255,20,0)"/></svg><div class="a" style="left:1816px;top:91px;width:100px;height:1px;background:#5a5a5a;"></div><div class="a sans" style="left:1814px;top:92px;width:104px;height:13px;line-height:13px;text-align:center;font-size:13px;color:#a8a8a8">CPU</div><div class="a" style="left:1816px;top:105px;width:100px;height:60px;background:#141414;"></div><div class="a" style="left:1816px;top:105px;width:100px;height:1px;background:#000000;"></div><div class="a" style="left:1915px;top:105px;width:1px;height:60px;background:#5a5a5a;"></div><div class="a" style="left:1816px;top:164px;width:100px;height:1px;background:#5a5a5a;"></div><svg class="a" style="left:0;top:0" width="1920" height="402"><path d="M1816 164 V158 H1817 V158 H1818 V158 H1819 V158 H1820 V158 H1821 V158 H1822 V158 H1823 V158 H1824 V158 H1825 V158 H1826 V158 H1827 V158 H1828 V158 H1829 V158 H1830 V158 H1831 V158 H1832 V158 H1833 V158 H1834 V158 H1835 V158 H1836 V158 H1837 V158 H1838 V158 H1839 V158 H1840 V158 H1841 V158 H1842 V158 H1843 V158 H1844 V158 H1845 V158 H1846 V158 H1847 V158 H1848 V158 H1849 V158 H1850 V158 H1851 V158 H1852 V158 H1853 V158 H1854 V158 H1855 V158 H1856 V159 H1857 V159 H1858 V159 H1859 V159 H1860 V159 H1861 V159 H1862 V159 H1863 V159 H1864 V159 H1865 V159 H1866 V159 H1867 V159 H1868 V159 H1869 V159 H1870 V159 H1871 V159 H1872 V159 H1873 V159 H1874 V159 H1875 V159 H1876 V160 H1877 V160 H1878 V160 H1879 V160 H1880 V160 H1881 V160 H1882 V160 H1883 V160 H1884 V160 H1885 V160 H1886 V160 H1887 V152 H1888 V152 H1889 V152 H1890 V152 H1891 V152 H1892 V142 H1893 V142 H1894 V142 H1895 V142 H1896 V142 H1897 V142 H1898 V142 H1899 V142 H1900 V142 H1901 V142 H1902 V140 H1903 V140 H1904 V140 H1905 V140 H1906 V133 H1907 V133 H1908 V133 H1909 V133 H1910 V133 H1911 V126 H1912 V126 H1913 V126 H1914 V126 H1915 V126 H1916 V164 Z" fill="#ff0000"/><rect x="1818" y="152" width="1" height="6" fill="#00a000"/><rect x="1823" y="152" width="1" height="6" fill="#00a000"/><rect x="1828" y="152" width="1" height="6" fill="#00a000"/><rect x="1833" y="152" width="1" height="6" fill="#00a000"/><rect x="1838" y="154" width="1" height="4" fill="#00a000"/><rect x="1843" y="155" width="1" height="3" fill="#00a000"/><rect x="1848" y="155" width="1" height="3" fill="#00a000"/><rect x="1853" y="154" width="1" height="4" fill="#00a000"/><rect x="1858" y="155" width="1" height="4" fill="#00a000"/><rect x="1861" y="155" width="1" height="4" fill="#00a000"/><rect x="1864" y="153" width="1" height="6" fill="#00a000"/><rect x="1868" y="156" width="1" height="3" fill="#00a000"/><rect x="1873" y="156" width="1" height="3" fill="#00a000"/><rect x="1877" y="155" width="1" height="5" fill="#00a000"/><rect x="1878" y="145" width="1" height="15" fill="#00a000"/><rect x="1882" y="158" width="1" height="2" fill="#00a000"/><rect x="1884" y="158" width="1" height="2" fill="#00a000"/><rect x="1887" y="146" width="1" height="6" fill="#00a000"/><rect x="1889" y="144" width="1" height="8" fill="#00a000"/><rect x="1893" y="115" width="1" height="27" fill="#00a000"/><rect x="1896" y="137" width="1" height="5" fill="#00a000"/><rect x="1898" y="126" width="1" height="16" fill="#00a000"/><rect x="1900" y="132" width="1" height="10" fill="#00a000"/><rect x="1907" y="130" width="1" height="3" fill="#00a000"/><rect x="1912" y="122" width="1" height="4" fill="#00a000"/><rect x="1914" y="122" width="1" height="4" fill="#00a000"/></svg><div class="a sans" style="left:1818px;top:107px;font-size:13px;line-height:14px;color:#00a000;white-space:pre">186 procs</div><div class="a sans" style="left:1826px;top:119px;font-size:13px;line-height:14px;color:#00a000;white-space:pre">4 users</div><div class="a" style="left:1816px;top:167px;width:100px;height:7px;background:#000000;"></div><div class="a" style="left:1915px;top:167px;width:1px;height:7px;background:#5a5a5a;"></div><div class="a" style="left:1816px;top:173px;width:100px;height:1px;background:#5a5a5a;"></div><div class="a sans" style="left:1814px;top:174px;width:104px;height:13px;line-height:13px;text-align:center;font-size:13px;color:#a8a8a8">Proc</div><div class="a" style="left:1816px;top:187px;width:100px;height:30px;background:#141414;"></div><div class="a" style="left:1816px;top:187px;width:100px;height:1px;background:#000000;"></div><div class="a" style="left:1915px;top:187px;width:1px;height:30px;background:#5a5a5a;"></div><div class="a" style="left:1816px;top:216px;width:100px;height:1px;background:#5a5a5a;"></div><svg class="a" style="left:0;top:0" width="1920" height="402"><path d="M1816 216 V216 H1817 V216 H1818 V216 H1819 V216 H1820 V216 H1821 V216 H1822 V216 H1823 V216 H1824 V216 H1825 V216 H1826 V216 H1827 V216 H1828 V216 H1829 V216 H1830 V216 H1831 V216 H1832 V216 H1833 V216 H1834 V216 H1835 V216 H1836 V216 H1837 V216 H1838 V216 H1839 V216 H1840 V216 H1841 V216 H1842 V216 H1843 V216 H1844 V216 H1845 V216 H1846 V216 H1847 V216 H1848 V216 H1849 V216 H1850 V216 H1851 V216 H1852 V216 H1853 V216 H1854 V216 H1855 V216 H1856 V216 H1857 V216 H1858 V216 H1859 V216 H1860 V216 H1861 V216 H1862 V216 H1863 V216 H1864 V216 H1865 V216 H1866 V216 H1867 V216 H1868 V216 H1869 V216 H1870 V216 H1871 V216 H1872 V216 H1873 V216 H1874 V216 H1875 V216 H1876 V216 H1877 V216 H1878 V216 H1879 V216 H1880 V216 H1881 V216 H1882 V216 H1883 V216 H1884 V216 H1885 V216 H1886 V216 H1887 V216 H1888 V216 H1889 V216 H1890 V216 H1891 V216 H1892 V216 H1893 V216 H1894 V216 H1895 V216 H1896 V216 H1897 V216 H1898 V216 H1899 V216 H1900 V216 H1901 V216 H1902 V216 H1903 V216 H1904 V216 H1905 V216 H1906 V216 H1907 V216 H1908 V216 H1909 V216 H1910 V216 H1911 V216 H1912 V216 H1913 V216 H1914 V216 H1915 V216 H1916 V216 Z" fill="#00a000"/><rect x="1833" y="214" width="1" height="1" fill="#00a000"/><rect x="1887" y="214" width="2" height="1" fill="#00a000"/></svg><div class="a sans" style="left:1818px;top:189px;font-size:13px;line-height:14px;color:#00a000">61K</div><div class="a" style="left:1816px;top:218px;width:100px;height:29px;background:#141414;"></div><div class="a" style="left:1816px;top:218px;width:100px;height:1px;background:#000000;"></div><div class="a" style="left:1915px;top:218px;width:1px;height:29px;background:#5a5a5a;"></div><div class="a" style="left:1816px;top:246px;width:100px;height:1px;background:#5a5a5a;"></div><svg class="a" style="left:0;top:0" width="1920" height="402"><path d="M1816 246 V246 H1817 V246 H1818 V246 H1819 V246 H1820 V246 H1821 V246 H1822 V246 H1823 V246 H1824 V246 H1825 V246 H1826 V245 H1827 V246 H1828 V245 H1829 V246 H1830 V246 H1831 V245 H1832 V246 H1833 V246 H1834 V246 H1835 V245 H1836 V246 H1837 V246 H1838 V245 H1839 V246 H1840 V246 H1841 V245 H1842 V246 H1843 V245 H1844 V246 H1845 V246 H1846 V246 H1847 V246 H1848 V246 H1849 V246 H1850 V246 H1851 V246 H1852 V246 H1853 V246 H1854 V245 H1855 V246 H1856 V246 H1857 V246 H1858 V246 H1859 V245 H1860 V246 H1861 V246 H1862 V246 H1863 V246 H1864 V246 H1865 V246 H1866 V246 H1867 V246 H1868 V245 H1869 V246 H1870 V246 H1871 V245 H1872 V246 H1873 V246 H1874 V246 H1875 V246 H1876 V245 H1877 V246 H1878 V246 H1879 V245 H1880 V246 H1881 V245 H1882 V246 H1883 V246 H1884 V244 H1885 V246 H1886 V243 H1887 V239 H1888 V244 H1889 V246 H1890 V246 H1891 V242 H1892 V233 H1893 V240 H1894 V244 H1895 V246 H1896 V245 H1897 V246 H1898 V245 H1899 V246 H1900 V246 H1901 V246 H1902 V245 H1903 V246 H1904 V246 H1905 V246 H1906 V245 H1907 V246 H1908 V246 H1909 V245 H1910 V246 H1911 V245 H1912 V246 H1913 V245 H1914 V246 H1915 V245 H1916 V246 Z" fill="#ff0000"/></svg><div class="a" style="left:1816px;top:249px;width:100px;height:7px;background:#000000;"></div><div class="a" style="left:1915px;top:249px;width:1px;height:7px;background:#5a5a5a;"></div><div class="a" style="left:1816px;top:255px;width:100px;height:1px;background:#5a5a5a;"></div><div class="a sans" style="left:1814px;top:256px;width:104px;height:13px;line-height:13px;text-align:center;font-size:13px;color:#a8a8a8">Disk</div><div class="a" style="left:1816px;top:270px;width:100px;height:30px;background:#141414;"></div><div class="a" style="left:1816px;top:270px;width:100px;height:1px;background:#000000;"></div><div class="a" style="left:1915px;top:270px;width:1px;height:30px;background:#5a5a5a;"></div><div class="a" style="left:1816px;top:299px;width:100px;height:1px;background:#5a5a5a;"></div><svg class="a" style="left:0;top:0" width="1920" height="402"><path d="M1816 299 V299 H1817 V299 H1818 V299 H1819 V299 H1820 V299 H1821 V299 H1822 V299 H1823 V299 H1824 V299 H1825 V299 H1826 V299 H1827 V299 H1828 V299 H1829 V299 H1830 V299 H1831 V299 H1832 V299 H1833 V299 H1834 V299 H1835 V299 H1836 V299 H1837 V299 H1838 V299 H1839 V299 H1840 V299 H1841 V299 H1842 V299 H1843 V299 H1844 V299 H1845 V299 H1846 V299 H1847 V299 H1848 V299 H1849 V299 H1850 V299 H1851 V299 H1852 V299 H1853 V299 H1854 V299 H1855 V299 H1856 V299 H1857 V299 H1858 V299 H1859 V299 H1860 V299 H1861 V299 H1862 V299 H1863 V299 H1864 V299 H1865 V299 H1866 V299 H1867 V299 H1868 V299 H1869 V299 H1870 V299 H1871 V299 H1872 V299 H1873 V299 H1874 V299 H1875 V299 H1876 V299 H1877 V299 H1878 V299 H1879 V299 H1880 V299 H1881 V299 H1882 V299 H1883 V299 H1884 V299 H1885 V299 H1886 V299 H1887 V299 H1888 V299 H1889 V299 H1890 V299 H1891 V299 H1892 V299 H1893 V299 H1894 V299 H1895 V299 H1896 V299 H1897 V299 H1898 V299 H1899 V299 H1900 V299 H1901 V299 H1902 V299 H1903 V299 H1904 V299 H1905 V299 H1906 V299 H1907 V299 H1908 V299 H1909 V299 H1910 V299 H1911 V299 H1912 V299 H1913 V299 H1914 V299 H1915 V299 H1916 V299 Z" fill="#00a000"/><rect x="1816" y="297" width="1" height="1" fill="#00a000"/><rect x="1818" y="297" width="1" height="1" fill="#00a000"/><rect x="1821" y="297" width="1" height="1" fill="#00a000"/><rect x="1823" y="297" width="1" height="1" fill="#00a000"/><rect x="1825" y="297" width="2" height="1" fill="#00a000"/><rect x="1828" y="297" width="1" height="1" fill="#00a000"/><rect x="1831" y="297" width="1" height="1" fill="#00a000"/><rect x="1834" y="297" width="2" height="1" fill="#00a000"/><rect x="1838" y="297" width="1" height="1" fill="#00a000"/><rect x="1843" y="297" width="1" height="1" fill="#00a000"/><rect x="1848" y="297" width="1" height="1" fill="#00a000"/><rect x="1853" y="297" width="1" height="1" fill="#00a000"/><rect x="1858" y="297" width="1" height="1" fill="#00a000"/><rect x="1863" y="297" width="3" height="1" fill="#00a000"/><rect x="1871" y="297" width="1" height="1" fill="#00a000"/><rect x="1876" y="297" width="1" height="1" fill="#00a000"/><rect x="1881" y="297" width="1" height="1" fill="#00a000"/><rect x="1886" y="297" width="3" height="1" fill="#00a000"/><rect x="1891" y="297" width="1" height="1" fill="#00a000"/><rect x="1896" y="297" width="1" height="1" fill="#00a000"/><rect x="1899" y="297" width="1" height="1" fill="#00a000"/><rect x="1902" y="297" width="1" height="1" fill="#00a000"/><rect x="1905" y="297" width="1" height="1" fill="#00a000"/><rect x="1910" y="297" width="1" height="1" fill="#00a000"/></svg><div class="a sans" style="left:1818px;top:272px;font-size:13px;line-height:14px;color:#00a000">0</div><div class="a" style="left:1816px;top:301px;width:100px;height:29px;background:#141414;"></div><div class="a" style="left:1816px;top:301px;width:100px;height:1px;background:#000000;"></div><div class="a" style="left:1915px;top:301px;width:1px;height:29px;background:#5a5a5a;"></div><div class="a" style="left:1816px;top:329px;width:100px;height:1px;background:#5a5a5a;"></div><svg class="a" style="left:0;top:0" width="1920" height="402"><path d="M1816 329 V329 H1817 V329 H1818 V329 H1819 V329 H1820 V329 H1821 V329 H1822 V329 H1823 V329 H1824 V329 H1825 V329 H1826 V329 H1827 V329 H1828 V329 H1829 V329 H1830 V329 H1831 V329 H1832 V329 H1833 V329 H1834 V329 H1835 V329 H1836 V329 H1837 V329 H1838 V329 H1839 V329 H1840 V329 H1841 V329 H1842 V329 H1843 V329 H1844 V329 H1845 V329 H1846 V329 H1847 V329 H1848 V329 H1849 V329 H1850 V329 H1851 V329 H1852 V329 H1853 V329 H1854 V329 H1855 V329 H1856 V329 H1857 V329 H1858 V329 H1859 V329 H1860 V329 H1861 V329 H1862 V329 H1863 V329 H1864 V329 H1865 V329 H1866 V329 H1867 V329 H1868 V329 H1869 V329 H1870 V329 H1871 V329 H1872 V329 H1873 V329 H1874 V329 H1875 V329 H1876 V329 H1877 V329 H1878 V329 H1879 V329 H1880 V329 H1881 V329 H1882 V329 H1883 V329 H1884 V329 H1885 V329 H1886 V329 H1887 V329 H1888 V329 H1889 V329 H1890 V329 H1891 V329 H1892 V329 H1893 V329 H1894 V329 H1895 V329 H1896 V329 H1897 V329 H1898 V329 H1899 V329 H1900 V329 H1901 V329 H1902 V329 H1903 V329 H1904 V329 H1905 V329 H1906 V329 H1907 V329 H1908 V329 H1909 V329 H1910 V329 H1911 V329 H1912 V329 H1913 V329 H1914 V329 H1915 V329 H1916 V329 Z" fill="#ff0000"/><rect x="1818" y="327" width="1" height="1" fill="#ff0000"/><rect x="1833" y="327" width="1" height="1" fill="#ff0000"/><rect x="1838" y="327" width="1" height="1" fill="#ff0000"/></svg><div class="a" style="left:1816px;top:332px;width:100px;height:7px;background:#000000;"></div><div class="a" style="left:1915px;top:332px;width:1px;height:7px;background:#5a5a5a;"></div><div class="a" style="left:1816px;top:338px;width:100px;height:1px;background:#5a5a5a;"></div><div class="a sans" style="left:1819px;top:339px;font-size:13px;line-height:15px;color:#a8a8a8">eth0</div><svg class="a" style="left:1888px;top:340px" width="30" height="14"><defs><radialGradient id="led" cx="0.4" cy="0.35" r="0.6"><stop offset="0" stop-color="#555"/><stop offset="1" stop-color="#080808"/></radialGradient></defs><circle cx="7" cy="7" r="5" fill="url(#led)" stroke="#111"/><circle cx="20" cy="7" r="5" fill="url(#led)" stroke="#111"/></svg><div class="a" style="left:1816px;top:355px;width:100px;height:1px;background:#5a5a5a;"></div><div class="a" style="left:1816px;top:357px;width:100px;height:6px;background:#000000;"></div><div class="a" style="left:1915px;top:357px;width:1px;height:6px;background:#5a5a5a;"></div><div class="a" style="left:1816px;top:362px;width:100px;height:1px;background:#5a5a5a;"></div><div class="a" style="left:1823px;top:358px;width:2px;height:4px;background:#00b000;"></div><div class="a" style="left:1826px;top:358px;width:2px;height:4px;background:#00b000;"></div><div class="a" style="left:1829px;top:358px;width:2px;height:4px;background:#00b000;"></div><div class="a sans" style="left:1814px;top:364px;width:106px;font-size:12px;line-height:15px;color:#a8a8a8;white-space:pre;text-align:center">995M - 844M fre</div><div class="a" style="left:1816px;top:381px;width:102px;height:2px;background:#111111;"></div><div class="a" style="left:1816px;top:383px;width:102px;height:1px;background:#5a5a5a;"></div><div class="a sans" style="left:1814px;top:384px;width:106px;font-size:13px;line-height:15px;color:#a8a8a8;white-space:pre;text-align:center">0d  0:33</div><div class="a" style="left:0px;top:1180px;width:1920px;height:20px;background:#5b7f5c;"></div><div class="a" style="left:1px;top:1181px;width:1918px;height:18px;background:#222222;"></div><div class="a" style="left:2px;top:1182px;width:16px;height:16px;background:#4d4d4d;"></div><div class="a" style="left:19px;top:1182px;width:52px;height:16px;background:#4d4d4d;"></div><div class="a" style="left:72px;top:1182px;width:16px;height:16px;background:#4d4d4d;"></div><svg class="a" style="left:2px;top:1182px" width="86" height="16"><polygon points="7,8 11,5 11,11" fill="#d8d8d8"/><polygon points="79,8 75,5 75,11" fill="#d8d8d8"/></svg><div class="a sans" style="left:19px;top:1183px;width:52px;height:16px;line-height:16px;text-align:center;font-size:13px;letter-spacing:1px;font-weight:bold;color:#f0f0f0">Deux</div><div class="a" style="left:89px;top:1182px;width:888px;height:16px;background:#436343;"></div><div class="a sans" style="left:89px;top:1183px;width:888px;height:16px;line-height:16px;text-align:center;font-size:12px;letter-spacing:0.6px;font-weight:bold;color:#f0f0f0">mc [root@duron]:~/Slackbuilds/asl</div><div class="a" style="left:977px;top:1182px;width:887px;height:16px;background:#5b7f5c;"></div><div class="a" style="left:978px;top:1183px;width:885px;height:14px;background:#222222;"></div><div class="a sans" style="left:977px;top:1182px;width:887px;height:16px;line-height:16px;text-align:center;font-size:12px;color:#8c8c8c">rxvt</div><div class="a" style="left:1865px;top:1182px;width:53px;height:16px;background:#4d4d4d;"></div><div class="a" style="left:1865px;top:1182px;width:53px;height:16px;line-height:16px;text-align:center;font-family:'Liberation Serif',serif;font-size:14px;letter-spacing:0.4px;font-weight:bold;color:#f0f0f0">21:04</div></body></html>
